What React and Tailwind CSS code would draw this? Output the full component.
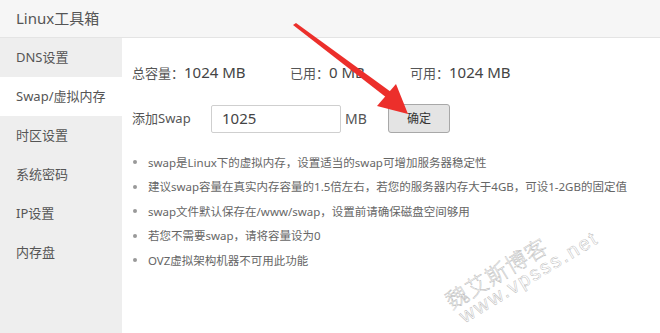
const MENU = ["DNS设置", "Swap/虚拟内存", "时区设置", "系统密码", "IP设置", "内存盘"];

const TIPS = [
  "swap是Linux下的虚拟内存，设置适当的swap可增加服务器稳定性",
  "建议swap容量在真实内存容量的1.5倍左右，若您的服务器内存大于4GB，可设1-2GB的固定值",
  "swap文件默认保存在/www/swap，设置前请确保磁盘空间够用",
  "若您不需要swap，请将容量设为0",
  "OVZ虚拟架构机器不可用此功能",
];

const App = () => {
  return (
    <div className="relative w-[660px] h-[333px] overflow-hidden bg-white text-[#555] font-['Noto_Sans','Noto_Sans_CJK_SC',sans-serif]">
      {/* Header */}
      <div className="h-[38px] bg-[#f6f6f6] border-b border-[#e4e4e4] pl-4 flex items-center text-[15px] text-[#555]">
        Linux工具箱
      </div>

      <div className="flex h-[295px]">
        {/* Sidebar */}
        <ul className="w-[122px] shrink-0 bg-[#eeeeee] flex flex-col">
          {MENU.map((item, i) => (
            <li
              key={item}
              className={`h-[39px] pl-4 flex items-center text-[13px] ${i === 1 ? "bg-white" : ""}`}
            >
              {item}
            </li>
          ))}
        </ul>

        {/* Content */}
        <div className="flex-1 pl-[10px] pt-[22px]">
          <div className="flex items-center h-[24px] text-[13px]">
            <div className="w-[158px]">
              总容量：<span className="text-[15px] text-[#444]">1024 MB</span>
            </div>
            <div className="w-[120px]">
              已用：<span className="text-[15px] text-[#444]">0 MB</span>
            </div>
            <div>
              可用：<span className="text-[15px] text-[#444]">1024 MB</span>
            </div>
          </div>

          <div className="flex items-center mt-[20px] h-[29px] text-[13px]">
            <span className="w-[79px]">添加Swap</span>
            <div className="w-[130px] h-[28px] border border-[#cfcfcf] rounded-[2px] pl-[10px] flex items-center text-[15px] text-[#444]">
              1025
            </div>
            <span className="ml-[4px] w-[43px] text-[14px]">MB</span>
            <button className="w-[62px] h-[29px] bg-[#e4e4e4] border border-[#a8a8a8] rounded-[3px] text-[12px] text-[#333]">
              确定
            </button>
          </div>

          <ul className="mt-[17px] flex flex-col text-[11.5px] text-[#666]">
            {TIPS.map((t) => (
              <li key={t} className="h-[24.5px] flex items-center">
                <span className="w-[4px] h-[4px] rounded-full bg-[#999] ml-[1px] mr-[11px]" />
                <span>{t}</span>
              </li>
            ))}
          </ul>
        </div>
      </div>

      {/* Red arrow annotation */}
      <svg className="absolute left-0 top-0 pointer-events-none" width="660" height="333">
        <polygon points="293,25 296,23 391,92 387,98" fill="#ec2f2b" />
        <polygon points="408,114 377,106 396,84" fill="#ec2f2b" />
      </svg>

      {/* Watermark */}
      <div className="absolute left-[452px] top-[290px] -rotate-[31deg] origin-left pointer-events-none leading-none">
        <div className="text-[22px] font-light tracking-[1px] text-white [-webkit-text-stroke:0.4px_#b0b0b0]">
          魏艾斯博客
        </div>
        <div className="text-[20px] tracking-[2px] text-white [-webkit-text-stroke:0.4px_#b0b0b0] ml-[4px] mt-[-1px] font-['Liberation_Sans',sans-serif]">
          www.vpsss.net
        </div>
      </div>
    </div>
  );
};

export default App;
